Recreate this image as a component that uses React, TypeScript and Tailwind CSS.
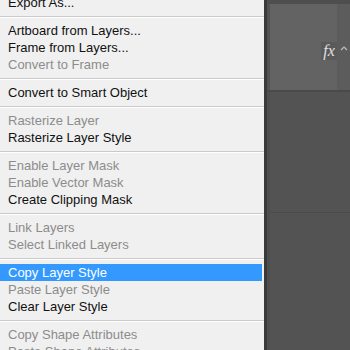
type Item = { label: string; disabled?: boolean; active?: boolean } | "sep"

const items: Item[] = [
  { label: "Export As..." },
  "sep",
  { label: "Artboard from Layers..." },
  { label: "Frame from Layers..." },
  { label: "Convert to Frame", disabled: true },
  "sep",
  { label: "Convert to Smart Object" },
  "sep",
  { label: "Rasterize Layer", disabled: true },
  { label: "Rasterize Layer Style" },
  "sep",
  { label: "Enable Layer Mask", disabled: true },
  { label: "Enable Vector Mask", disabled: true },
  { label: "Create Clipping Mask" },
  "sep",
  { label: "Link Layers", disabled: true },
  { label: "Select Linked Layers", disabled: true },
  "sep",
  { label: "Copy Layer Style", active: true },
  { label: "Paste Layer Style", disabled: true },
  { label: "Clear Layer Style" },
  "sep",
  { label: "Copy Shape Attributes", disabled: true },
  { label: "Paste Shape Attributes", disabled: true },
]

export default function App() {
  return (
    <div
      className="flex w-[350px] h-[350px] overflow-hidden bg-[#535353]"
      style={{ fontFamily: '"Liberation Sans", Arial, sans-serif' }}
    >
      {/* context menu */}
      <div className="w-[264px] shrink-0 bg-[#f0f0f0] text-[13px] leading-[17px]">
        <div className="mt-[-6px] flex flex-col">
          {items.map((it, i) =>
            it === "sep" ? (
              <div key={i} className="h-[11px] pt-[5px]">
                <div className="h-px bg-[#cacaca]" />
                <div className="h-px bg-white" />
              </div>
            ) : (
              <div
                key={i}
                className={
                  "h-[17px] pl-[8px] mr-[2px] whitespace-nowrap " +
                  (it.active
                    ? "bg-[#3399ff] text-white"
                    : it.disabled
                    ? "text-[#8c8c8c]"
                    : "text-[#111111]")
                }
              >
                {it.label}
              </div>
            )
          )}
        </div>
      </div>

      {/* layers panel behind */}
      <div className="flex flex-1">
        <div className="w-[3px] bg-[#3a3a3a]" />
        <div className="flex flex-1 flex-col">
          <div className="h-[4px] bg-[#4e4e4e]" />
          <div className="flex h-[86px] bg-[#5c5c5c]">
            <div className="w-[3px] bg-[#535353]" />
            <div className="relative flex-1 bg-[#636363]">
              <div
                className="absolute right-0 top-[38px] flex h-[18px] w-[16px] items-center justify-center bg-[#5a5a5a] text-[16px] italic leading-none text-[#e0e0e0]"
                style={{ fontFamily: '"Liberation Serif", serif' }}
              >
                fx
              </div>
            </div>
            <div className="flex w-[13px] items-start justify-center pt-[42px]">
              <svg width="8" height="5" viewBox="0 0 8 5">
                <path d="M1 4 L4 1 L7 4" stroke="#bdbdbd" strokeWidth="1.2" fill="none" />
              </svg>
            </div>
          </div>
          <div className="h-[2px] bg-[#4a4a4a]" />
          <div className="flex flex-1">
            <div className="w-[3px] bg-[#4e4e4e]" />
            <div className="flex-1 flex flex-col">
              <div className="h-[120px] bg-[#535353]" />
              <div className="h-px bg-[#4a4a4a]" />
              <div className="flex-1 bg-[#535353]" />
            </div>
          </div>
        </div>
      </div>
    </div>
  )
}
